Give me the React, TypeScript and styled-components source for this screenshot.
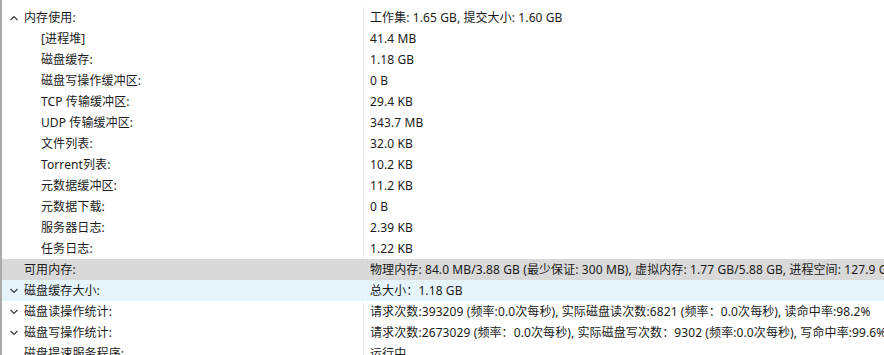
import React from "react";
import styled, { createGlobalStyle } from "styled-components";

const Global = createGlobalStyle`
  html, body { margin: 0; padding: 0; background: #fff; overflow: hidden; height: 355px; }
  #root { height: 355px; overflow: hidden; }
`;

const Panel = styled.div`
  height: 355px;
  box-sizing: border-box;
  border-left: 2px solid #ababab;
  padding-top: 7px;
  overflow: hidden;
  font-family: "Noto Sans", "Noto Sans CJK SC", sans-serif;
  font-size: 12px;
  letter-spacing: 0.1px;
  color: #1b1b1b;
`;

type Tone = "none" | "selected" | "hover";

const Row = styled.div<{ $tone: Tone }>`
  display: grid;
  grid-template-columns: 362px 1fr;
  height: 21px;
  line-height: 21px;
  white-space: nowrap;
  background: ${(p) =>
    p.$tone === "selected" ? "#d9d9d9" : p.$tone === "hover" ? "#e5f3fb" : "transparent"};
`;

const LabelCell = styled.div<{ $level: number; $tone: Tone }>`
  display: flex;
  align-items: center;
  padding-left: ${(p) => (p.$level === 0 ? 8 : 39)}px;
  border-right: 1px solid ${(p) => (p.$tone === "none" ? "#e9eff6" : "transparent")};
  overflow: hidden;
`;

const Toggle = styled.span`
  display: inline-flex;
  width: 14px;
  height: 21px;
  align-items: center;
  justify-content: flex-start;
  flex: none;
`;

const ValueCell = styled.div`
  padding-left: 6px;
  overflow: visible;
`;

const Chevron = ({ dir }: { dir: "up" | "down" }) => (
  <svg width="9" height="6" viewBox="0 0 9 6">
    <polyline
      points={dir === "up" ? "0.5,5 4,1.5 7.5,5" : "0.5,1 4,4.5 7.5,1"}
      fill="none"
      stroke="#3c3c3c"
      strokeWidth="1.2"
    />
  </svg>
);

type Item = { label: string; value: string; level: number; chevron?: "up" | "down"; tone?: Tone };

const items: Item[] = [
  { label: "内存使用:", value: "工作集: 1.65 GB, 提交大小: 1.60 GB", level: 0, chevron: "up" },
  { label: "[进程堆]", value: "41.4 MB", level: 1 },
  { label: "磁盘缓存:", value: "1.18 GB", level: 1 },
  { label: "磁盘写操作缓冲区:", value: "0 B", level: 1 },
  { label: "TCP 传输缓冲区:", value: "29.4 KB", level: 1 },
  { label: "UDP 传输缓冲区:", value: "343.7 MB", level: 1 },
  { label: "文件列表:", value: "32.0 KB", level: 1 },
  { label: "Torrent列表:", value: "10.2 KB", level: 1 },
  { label: "元数据缓冲区:", value: "11.2 KB", level: 1 },
  { label: "元数据下载:", value: "0 B", level: 1 },
  { label: "服务器日志:", value: "2.39 KB", level: 1 },
  { label: "任务日志:", value: "1.22 KB", level: 1 },
  {
    label: "可用内存:",
    value: "物理内存: 84.0 MB/3.88 GB (最少保证: 300 MB), 虚拟内存: 1.77 GB/5.88 GB, 进程空间: 127.9 GB/128 GB",
    level: 0,
    tone: "selected",
  },
  { label: "磁盘缓存大小:", value: "总大小：1.18 GB", level: 0, chevron: "down", tone: "hover" },
  {
    label: "磁盘读操作统计:",
    value: "请求次数:393209 (频率:0.0次每秒), 实际磁盘读次数:6821 (频率：0.0次每秒), 读命中率:98.2%",
    level: 0,
    chevron: "down",
  },
  {
    label: "磁盘写操作统计:",
    value: "请求次数:2673029 (频率：0.0次每秒), 实际磁盘写次数：9302 (频率:0.0次每秒), 写命中率:99.6%",
    level: 0,
    chevron: "down",
  },
  { label: "磁盘提速服务程序:", value: "运行中", level: 0 },
];

export default function App() {
  return (
    <>
      <Global />
      <Panel>
        {items.map((it, i) => {
          const tone = it.tone ?? "none";
          return (
            <Row key={i} $tone={tone}>
              <LabelCell $level={it.level} $tone={tone}>
                {it.level === 0 && <Toggle>{it.chevron && <Chevron dir={it.chevron} />}</Toggle>}
                {it.label}
              </LabelCell>
              <ValueCell>{it.value}</ValueCell>
            </Row>
          );
        })}
      </Panel>
    </>
  );
}
